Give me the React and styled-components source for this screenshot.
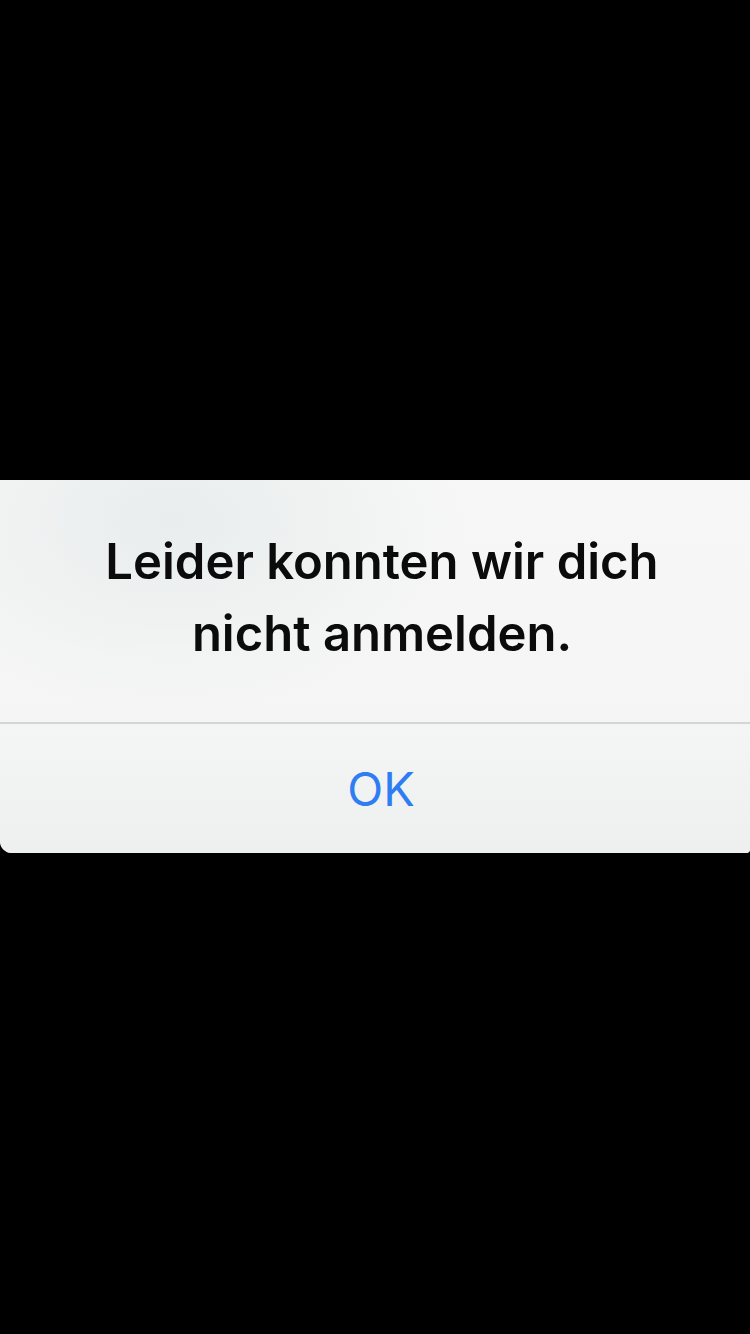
import React from "react";
import styled, { createGlobalStyle } from "styled-components";

const Global = createGlobalStyle`
  html, body { margin: 0; padding: 0; background: #000; }
  #root { min-height: 1334px; }
`;

const Screen = styled.div`
  width: 750px;
  height: 1334px;
  background: #000;
  padding-top: 480px;
  box-sizing: border-box;
  display: flex;
  flex-direction: column;
`;

const Alert = styled.div`
  width: 750px;
  height: 373px;
  display: flex;
  flex-direction: column;
  background: radial-gradient(ellipse 300px 190px at 170px 40px, #e9eded 0%, rgba(240,242,242,0) 100%),
    linear-gradient(180deg, #f7f7f7 0%, #f4f4f4 100%);
  border-radius: 0 0 4px 12px;
  overflow: hidden;
`;

const Message = styled.div`
  height: 242px;
  box-sizing: border-box;
  padding-top: 46px;
  padding-left: 14px;
  display: flex;
  justify-content: center;
  font-family: Inter, "Liberation Sans", sans-serif;
  font-weight: 600;
  font-size: 49px;
  line-height: 72px;
  letter-spacing: 0;
  color: #0b0b0b;
  text-align: center;
`;

const Divider = styled.div`
  height: 2px;
  background: #d4d5d5;
`;

const Button = styled.div`
  flex: 1;
  display: flex;
  align-items: center;
  justify-content: center;
  padding-left: 12px;
  font-family: Inter, "Liberation Sans", sans-serif;
  font-weight: 400;
  font-size: 47px;
  color: #2f7df2;
  background: linear-gradient(180deg, #f4f5f5 0%, #eef0f0 100%);
`;

export default function App() {
  return (
    <>
      <Global />
      <Screen>
        <Alert>
          <Message>
            Leider konnten wir dich
            <br />
            nicht anmelden.
          </Message>
          <Divider />
          <Button>OK</Button>
        </Alert>
      </Screen>
    </>
  );
}
